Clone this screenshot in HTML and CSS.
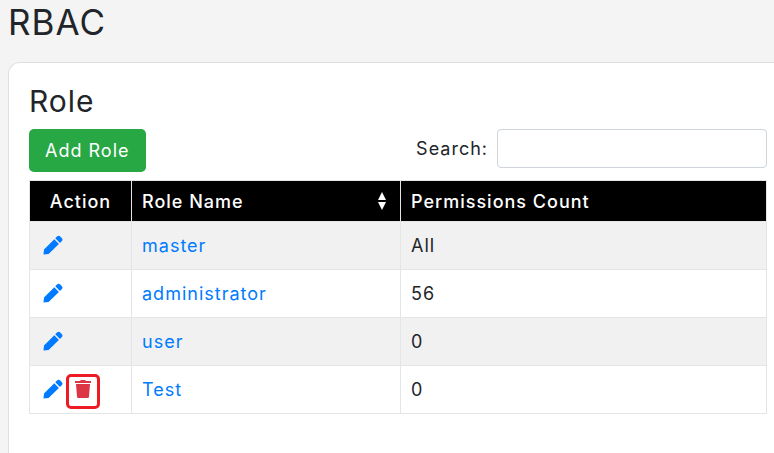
FILE: index.html
```
<!DOCTYPE html>
<html lang="en">
<head>
  <meta charset="UTF-8">
  <meta name="viewport" content="width=device-width, initial-scale=1.0">
  <title>RBAC</title>
  <link rel="stylesheet" href="styles.css">
</head>
<body>
  <svg class="sprite" aria-hidden="true">
    <symbol id="icon-pencil" viewBox="0 0 20 20">
      <path d="M.5 19.500L1 14.600 11.300 4.300 15.900 8.900 5.600 19zM12.300 3.300L14 1.600a2.300 2.300 0 0 1 3.200 0l1.500 1.500a2.300 2.300 0 0 1 0 3.200L16.900 7.900z"/>
    </symbol>
    <symbol id="icon-trash" viewBox="0 0 20 20">
      <path d="M2 2h5l1-1h4l1 1h5v2H2zM3 5h14l-1 12.500a1.500 1.500 0 0 1-1.500 1.500h-9A1.500 1.500 0 0 1 4 17.500z"/>
    </symbol>
  </svg>

  <h1>RBAC</h1>

  <main class="card">
    <h2>Role</h2>

    <div class="toolbar">
      <button type="button" class="btn-add">Add Role</button>
      <div class="search">
        <label for="search">Search:</label>
        <input type="search" id="search" name="search">
      </div>
    </div>

    <table class="roles">
      <thead>
        <tr>
          <th class="col-action">Action</th>
          <th class="col-name">
            <div class="sortable">
              Role Name
              <svg class="sort" viewBox="0 0 8 18" aria-hidden="true"><path d="M4 0l4 8H0zM0 10h8l-4 8z"/></svg>
            </div>
          </th>
          <th>Permissions Count</th>
        </tr>
      </thead>
      <tbody>
        <tr>
          <td><div class="actions"><a href="#" class="edit" aria-label="Edit master"><svg><use href="#icon-pencil"/></svg></a></div></td>
          <td><a href="#">master</a></td>
          <td>All</td>
        </tr>
        <tr>
          <td><div class="actions"><a href="#" class="edit" aria-label="Edit administrator"><svg><use href="#icon-pencil"/></svg></a></div></td>
          <td><a href="#">administrator</a></td>
          <td>56</td>
        </tr>
        <tr>
          <td><div class="actions"><a href="#" class="edit" aria-label="Edit user"><svg><use href="#icon-pencil"/></svg></a></div></td>
          <td><a href="#">user</a></td>
          <td>0</td>
        </tr>
        <tr>
          <td>
            <div class="actions">
              <a href="#" class="edit" aria-label="Edit Test"><svg><use href="#icon-pencil"/></svg></a>
              <button type="button" class="delete" aria-label="Delete Test"><svg><use href="#icon-trash"/></svg></button>
            </div>
          </td>
          <td><a href="#">Test</a></td>
          <td>0</td>
        </tr>
      </tbody>
    </table>
  </main>
</body>
</html>
```
FILE: styles.css
```
* {
  box-sizing: border-box;
}

body {
  margin: 0;
  padding-left: 8px;
  min-height: 100vh;
  display: flex;
  flex-direction: column;
  background-color: #f4f4f4;
  color: #212529;
  font-family: Inter, sans-serif;
  font-size: 18px;
  line-height: 27px;
  letter-spacing: 1px;
}

h1,
h2 {
  margin: 0;
  font-weight: 400;
}

h1 {
  font-size: 35px;
  line-height: 44px;
  margin-bottom: 18px;
}

h2 {
  font-size: 30px;
  line-height: 36px;
  margin-bottom: 10px;
}

a {
  color: #007bff;
  text-decoration: none;
}

.sprite {
  display: none;
}

.card {
  flex: 1;
  padding: 20px 7px 38px 20px;
  background-color: #fff;
  border: 1px solid #dfdfdf;
  border-width: 1px 0 0 1px;
  border-radius: 12px 0 0 0;
}

.toolbar {
  display: flex;
  justify-content: space-between;
  align-items: flex-start;
  margin-bottom: 8px;
}

.btn-add {
  padding: 8px 16px;
  background-color: #28a745;
  color: #fff;
  border: none;
  border-radius: 5px;
  font: inherit;
  letter-spacing: inherit;
  cursor: pointer;
}

.search {
  display: flex;
  align-items: center;
  gap: 9px;
}

.search input {
  width: 270px;
  height: 39px;
  padding: 4px 8px;
  border: 1px solid #ced4da;
  border-radius: 4px;
  font: inherit;
}

.roles {
  width: 100%;
  table-layout: fixed;
  border-collapse: collapse;
}

.roles th,
.roles td {
  border: 1px solid #e4e5e7;
  padding: 10px;
  text-align: left;
}

.roles th {
  padding: 6px 10px;
  height: 41px;
  background-color: #000;
  color: #fff;
  font-weight: 500;
}

.roles td {
  height: 48px;
}

.roles tbody tr:nth-child(odd) {
  background-color: #f1f1f1;
}

.roles .col-action {
  width: 102px;
  text-align: center;
}

.roles .col-name {
  width: 269px;
}

.sortable {
  display: flex;
  justify-content: space-between;
  align-items: center;
  padding-right: 4px;
}

.sort {
  width: 8px;
  height: 18px;
  fill: #fff;
}

.actions {
  display: flex;
  align-items: center;
  gap: 3px;
  margin-bottom: 2px;
  padding-left: 3px;
}

.actions svg {
  display: block;
  width: 20px;
  height: 20px;
  fill: currentColor;
}

.delete {
  display: flex;
  align-items: center;
  justify-content: center;
  width: 34px;
  height: 35px;
  margin: -2px 0 -8px;
  padding: 0 0 6px;
  background: none;
  border: 3px solid #ed1c24;
  border-radius: 5px;
  color: #dc3545;
  cursor: pointer;
}
```
